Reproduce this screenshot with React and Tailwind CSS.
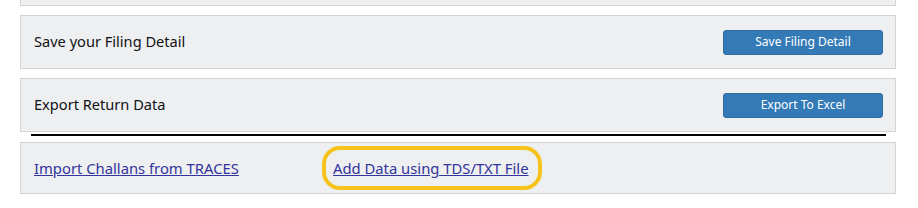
import React from 'react';

const Row = ({ label, button }) => (
  <div className="flex h-[54px] items-center justify-between border border-[#d3d3d3] bg-[#eeeff1] pl-[13px] pr-[12px]">
    <span className="text-[14.6px] text-[#111]">{label}</span>
    <button className="h-[25px] w-[160px] rounded-[3px] border border-[#2e6da4] bg-[#337ab7] text-[12px] text-white">
      {button}
    </button>
  </div>
);

const App = () => {
  return (
    <div className="h-[208px] w-[918px] overflow-hidden bg-white pl-[20px] pr-[22px]" style={{ fontFamily: '"Noto Sans", "Open Sans", sans-serif' }}>
      <div className="h-[6px] border-x border-b border-[#d3d3d3] bg-[#eeeff1]" />

      <div className="mt-[9px]">
        <Row label="Save your Filing Detail" button="Save Filing Detail" />
      </div>

      <div className="mt-[9px]">
        <Row label="Export Return Data" button="Export To Excel" />
      </div>

      <div className="ml-[11px] mr-[10px] mt-[2px] h-[2px] bg-black" />

      <div className="relative mt-[6px] flex h-[52px] items-center border border-[#d3d3d3] bg-[#eeeff1] pl-[13px] text-[14.8px]">
        <a href="#" className="w-[299px] text-[#33349c] underline">Import Challans from TRACES</a>
        <a href="#" className="text-[#33349c] underline">Add Data using TDS/TXT File</a>
        <div className="pointer-events-none absolute left-[301px] top-[3px] h-[44px] w-[220px] rounded-[18px] border-4 border-[#f6c21c]" />
      </div>
    </div>
  );
};

export default App;
